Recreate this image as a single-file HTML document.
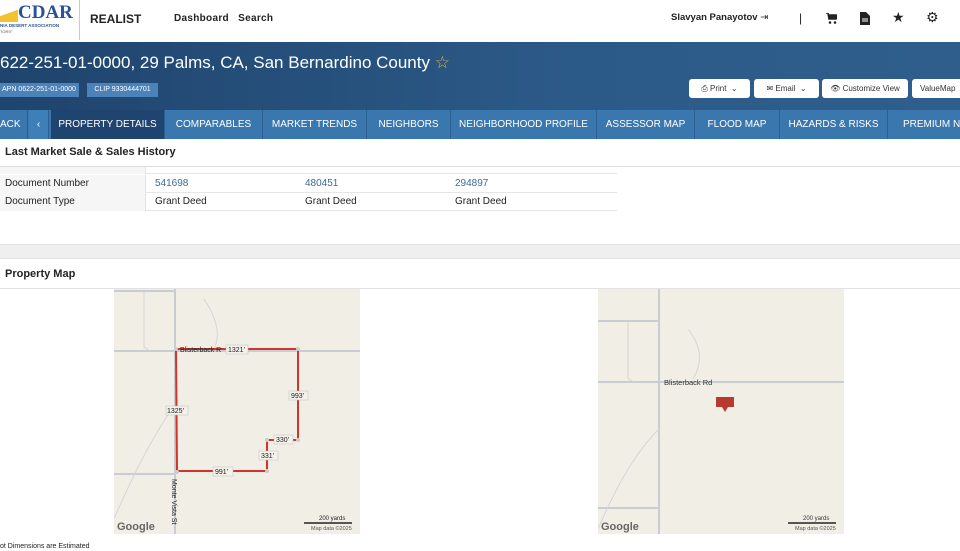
<!DOCTYPE html>
<html><head><meta charset="utf-8"><style>
*{margin:0;padding:0;box-sizing:border-box}
body{width:960px;height:551px;overflow:hidden;background:#fff;font-family:"Liberation Sans","DejaVu Sans",sans-serif;color:#222;position:relative}
.abs{position:absolute}
.top{top:0;left:0;width:960px;height:42px;background:#fff}
.band{top:42px;left:0;width:960px;height:68px;background:linear-gradient(90deg,#1f446d,#2c5a88 60%,#2f5e8d)}
.tabs{top:110px;left:0;width:960px;height:29px;background:#3a77ae}
.tab{position:absolute;top:0;height:29px;line-height:29px;color:#fff;font-size:10px;text-align:center;border-right:1px solid #2c5f91;white-space:nowrap;overflow:hidden}
.btn{position:absolute;top:79px;height:19px;background:#fff;border-radius:3px;font-size:8px;line-height:19px;text-align:center;color:#333}
.row{position:absolute;left:0;width:617px;height:18px;border-bottom:1px solid #e6e6e6;font-size:10px;line-height:18px}
.row .l{position:absolute;left:0;width:146px;height:18px;background:#f6f6f6;padding-left:5px;border-right:1px solid #e3e3e3}
.row span{position:absolute}
.map{position:absolute;top:289px;width:246px;height:245px;background:#f1eee6;overflow:hidden}
</style></head><body>
<div class="abs top">
 <div class="abs" style="left:0;top:0;width:80px;height:40px;border-right:1px solid #ccc">
  <div class="abs" style="left:0;top:8px;width:18px;height:14px;background:linear-gradient(160deg,transparent 40%,#f2c230 40%)"></div>
  <div class="abs" style="left:18px;top:2px;font:bold 19px 'Liberation Serif',serif;color:#27529a">CDAR</div>
  <div class="abs" style="left:0;top:23px;font-size:4.5px;color:#27529a;font-weight:bold">NIA DESERT ASSOCIATION</div>
  <div class="abs" style="left:0;top:29px;font-size:4px;color:#555">TORS°</div>
 </div>
 <div class="abs" style="left:90px;top:12px;font-size:12px;font-weight:bold;color:#222">REALIST</div>
 <div class="abs" style="left:174px;top:13px;font-size:10px;font-weight:bold;color:#222;letter-spacing:.3px">Dashboard&nbsp;&nbsp;&nbsp;Search</div>
 <div class="abs" style="left:671px;top:12px;font-size:9.5px;font-weight:bold">Slavyan Panayotov <span style="font-weight:normal">⇥</span></div>
 <div class="abs" style="left:799px;top:11px;font-size:12px">|</div>
 <svg class="abs" style="left:826px;top:13px" width="11" height="11"><path d="M0 0H2L3 6H10L11 2H2.5" fill="none" stroke="#222" stroke-width="1.6"/><rect x="3" y="2" width="8" height="4" fill="#222"/><circle cx="4" cy="9.5" r="1.3" fill="#222"/><circle cx="9" cy="9.5" r="1.3" fill="#222"/></svg>
 <svg class="abs" style="left:860px;top:12px" width="10" height="13"><path d="M0 0H6L10 4V13H0Z" fill="#222"/><path d="M2 7H8M2 9H8" stroke="#fff"/></svg>
 <div class="abs" style="left:892px;top:9px;font-size:14px">★</div>
 <div class="abs" style="left:926px;top:9px;font-size:14px">⚙</div>
</div>
<div class="abs band">
 <div class="abs" style="left:0;top:11px;font-size:17px;color:#fff">622-251-01-0000, 29 Palms, CA, San Bernardino County <span style="color:#e6b43c">☆</span></div>
 <div class="abs" style="left:0;top:41px;width:79px;height:14px;background:#4a82b9;color:#fff;font-size:7px;line-height:14px;padding-left:2px">APN 0622-251-01-0000</div>
 <div class="abs" style="left:87px;top:41px;width:71px;height:14px;background:#4a82b9;color:#fff;font-size:7px;line-height:14px;text-align:center">CLIP 9330444701</div>
</div>
<div class="btn" style="left:689px;width:61px">⎙ Print &nbsp;⌄</div>
<div class="btn" style="left:754px;width:65px">✉ Email &nbsp;⌄</div>
<div class="btn" style="left:822px;width:86px">👁︎ Customize View</div>
<div class="btn" style="left:912px;width:60px;text-align:left;padding-left:8px">ValueMap</div>
<div class="abs tabs">
 <div class="tab" style="left:0;width:28px;text-align:left">ACK</div>
 <div class="tab" style="left:29px;width:20px;background:#3f7fb8">‹</div>
 <div class="tab" style="left:51px;width:114px;background:#1f4470">PROPERTY DETAILS</div>
 <div class="tab" style="left:165px;width:98px">COMPARABLES</div>
 <div class="tab" style="left:263px;width:104px">MARKET TRENDS</div>
 <div class="tab" style="left:367px;width:84px">NEIGHBORS</div>
 <div class="tab" style="left:451px;width:146px">NEIGHBORHOOD PROFILE</div>
 <div class="tab" style="left:597px;width:98px">ASSESSOR MAP</div>
 <div class="tab" style="left:695px;width:85px">FLOOD MAP</div>
 <div class="tab" style="left:780px;width:108px">HAZARDS &amp; RISKS</div>
 <div class="tab" style="left:888px;width:80px;text-align:left;padding-left:15px">PREMIUM NE</div>
</div>
<div class="abs" style="left:5px;top:146px;font-size:11px;font-weight:bold;color:#222">Last Market Sale &amp; Sales History</div>
<div class="abs" style="left:0;top:166px;width:960px;height:1px;background:#ddd"></div>
<div class="row" style="top:167px;height:7px"><div class="l" style="height:7px"></div></div>
<div class="row" style="top:175px"><div class="l">Document Number</div><span style="left:155px;color:#3b6a97">541698</span><span style="left:305px;color:#3b6a97">480451</span><span style="left:455px;color:#3b6a97">294897</span></div>
<div class="row" style="top:193px"><div class="l">Document Type</div><span style="left:155px">Grant Deed</span><span style="left:305px">Grant Deed</span><span style="left:455px">Grant Deed</span></div>
<div class="abs" style="left:0;top:244px;width:960px;height:15px;background:#efefef;border-top:1px solid #e2e2e2;border-bottom:1px solid #e2e2e2"></div>
<div class="abs" style="left:5px;top:268px;font-size:11px;font-weight:bold">Property Map</div>
<div class="abs" style="left:0;top:288px;width:960px;height:1px;background:#e2e2e2"></div>
<div class="map" style="left:114px">
<svg width="246" height="245" style="position:absolute;left:0;top:0">
 <g stroke="#c9ccd0" stroke-width="2" fill="none"><path d="M0 62H246M0 185H62M61 0V245M0 2H61"/></g>
 <g stroke="#d3d5d8" stroke-width="1" fill="none"><path d="M30 0V58L36 62M90 10Q110 40 100 60M0 230Q30 160 61 115"/></g>
 <path d="M62 60H184V151H153V182H63Z" fill="none" stroke="#d0342c" stroke-width="2"/>
 <g fill="#ccc"><circle cx="62" cy="60" r="2"/><circle cx="184" cy="60" r="2"/><circle cx="184" cy="151" r="2"/><circle cx="153" cy="151" r="2"/><circle cx="153" cy="182" r="2"/><circle cx="63" cy="183" r="2"/></g>
 <g font-size="7" fill="#222" font-family="Liberation Sans"><text x="66" y="63">Blisterback R</text></g>
 <g fill="#f4f1ea" stroke="#bbb" stroke-width=".5"><rect x="112" y="56" width="22" height="9"/><rect x="52" y="117" width="22" height="9"/><rect x="175" y="102" width="19" height="9"/><rect x="160" y="146" width="19" height="9"/><rect x="145" y="162" width="19" height="9"/><rect x="99" y="178" width="20" height="9"/></g>
 <g font-size="7" fill="#222" font-family="Liberation Sans"><text x="114" y="63">1321'</text><text x="53" y="124">1325'</text><text x="177" y="109">993'</text><text x="162" y="153">330'</text><text x="147" y="169">331'</text><text x="101" y="185">991'</text>
 <text x="0" y="0" transform="translate(58,190) rotate(90)">Monte Vista St</text>
 <text x="3" y="241" font-size="11" font-weight="bold" fill="#666">Google</text><text x="205" y="231" font-size="6">200 yards</text><text x="197" y="241" font-size="5.5" fill="#555">Map data ©2025</text></g>
 <path d="M190 234H238" stroke="#555" stroke-width="2"/>
</svg></div>
<div class="map" style="left:598px">
<svg width="246" height="245" style="position:absolute;left:0;top:0">
 <g stroke="#c9ccd0" stroke-width="2" fill="none"><path d="M0 93H246M61 0V245M0 32H61M0 219H61"/></g>
 <g stroke="#d3d5d8" stroke-width="1" fill="none"><path d="M30 32V90L36 93M90 40Q110 65 95 90M0 240Q30 170 61 140"/></g>
 <path d="M118 108H136V118H130L127 123L124 118H118Z" fill="#b83a2f"/>
 <g font-size="7.5" fill="#333" font-family="Liberation Sans"><text x="66" y="96">Blisterback Rd</text>
 <text x="3" y="241" font-size="11" font-weight="bold" fill="#666">Google</text><text x="205" y="231" font-size="6">200 yards</text><text x="197" y="241" font-size="5.5" fill="#555">Map data ©2025</text></g>
 <path d="M190 234H238" stroke="#555" stroke-width="2"/>
</svg></div>
<div class="abs" style="left:0;top:543px;font-size:7px;color:#222">ot Dimensions are Estimated</div>
</body></html>
